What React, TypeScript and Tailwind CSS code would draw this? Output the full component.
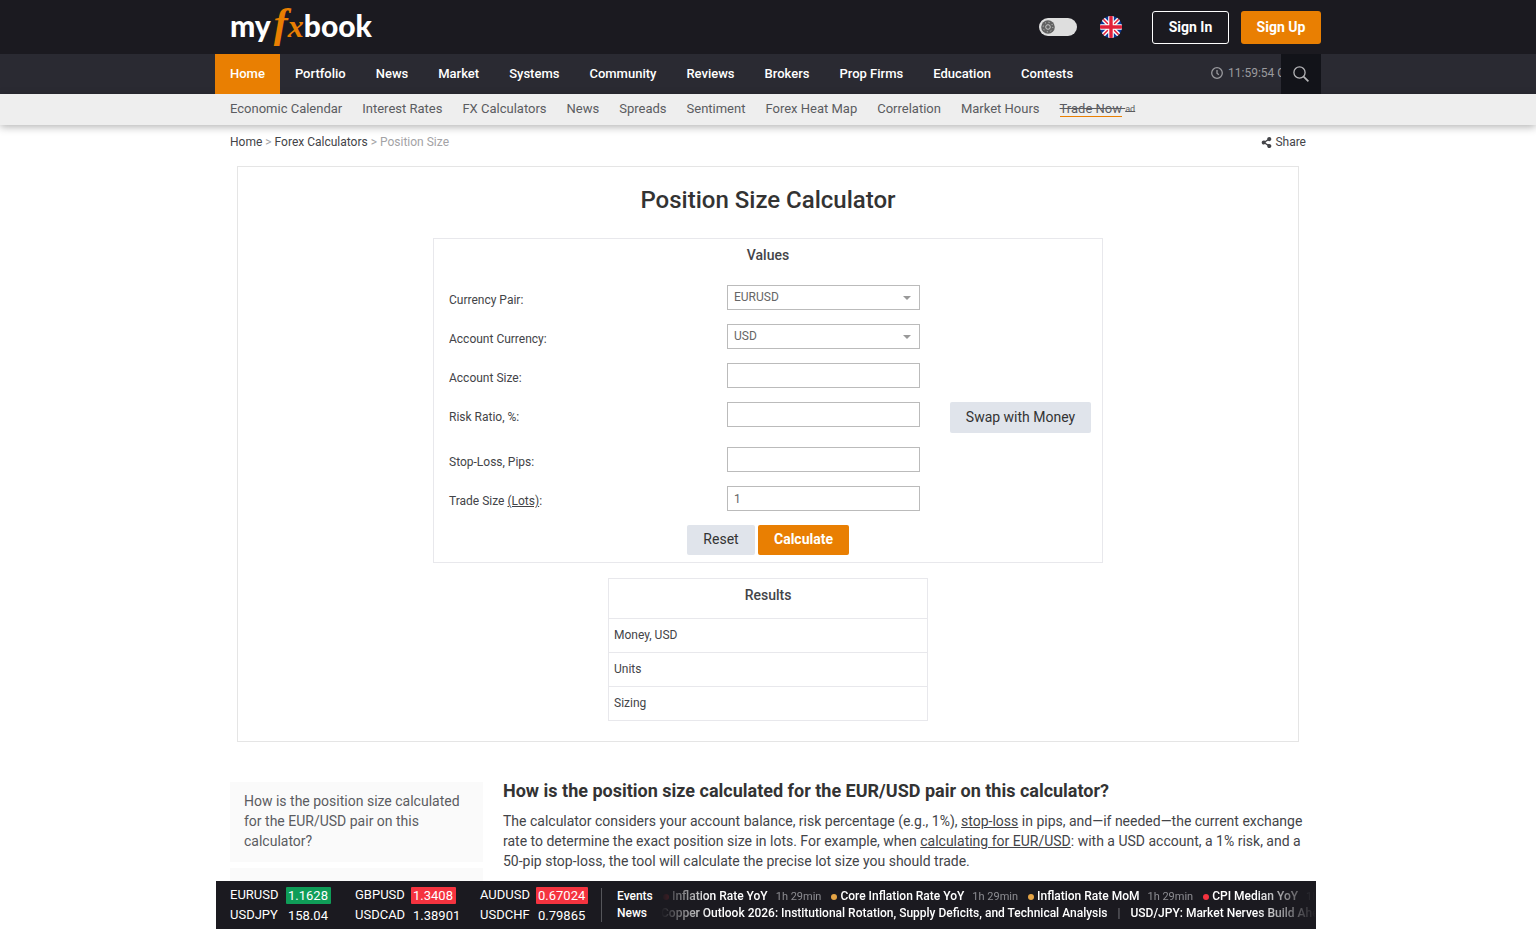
import React from "react";
import { FaShareAlt } from "react-icons/fa";

const NAV = ["Home", "Portfolio", "News", "Market", "Systems", "Community", "Reviews", "Brokers", "Prop Firms", "Education", "Contests"];
const SUBNAV = ["Economic Calendar", "Interest Rates", "FX Calculators", "News", "Spreads", "Sentiment", "Forex Heat Map", "Correlation", "Market Hours"];

function Logo() {
  return (
    <a href="#" aria-label="myfxbook" className="flex h-[54px] items-baseline font-['Lato',sans-serif] text-[30px] leading-[46px] font-black text-white">
      <span>my</span>
      <span className="ml-[3px] font-['Liberation_Serif',serif] text-[42px] font-bold text-[#e97f02] italic">f</span>
      <span className="font-['Liberation_Serif',serif] text-[32px] font-bold text-[#e97f02] italic">x</span>
      <span>book</span>
    </a>
  );
}

function ThemeToggle() {
  return (
    <button type="button" aria-label="Toggle dark mode" className="flex h-[18px] w-[38px] items-center rounded-full bg-[#dedede] px-0.5">
      <svg viewBox="0 0 14 14" className="size-[14px]">
        <circle cx="7" cy="7" r="6.8" fill="#626262" />
        <circle cx="7" cy="7" r="2.3" fill="none" stroke="#d0d0d0" strokeWidth="0.9" />
        <circle cx="7" cy="7" r="4.8" fill="none" stroke="#d0d0d0" strokeWidth="1" strokeDasharray="1 2.77" />
      </svg>
    </button>
  );
}

function Flag() {
  return (
    <button type="button" aria-label="English" className="size-[22px]">
      <svg viewBox="0 0 22 22" className="size-[22px]">
        <clipPath id="flag-round"><circle cx="11" cy="11" r="11" /></clipPath>
        <g clipPath="url(#flag-round)">
          <rect width="22" height="22" fill="#0a3a97" />
          <path d="M0 0L22 22M22 0L0 22" stroke="#fff" strokeWidth="4.4" />
          <path d="M0 0L22 22M22 0L0 22" stroke="#e2203a" strokeWidth="1.5" />
          <path d="M11 0V22M0 11H22" stroke="#fff" strokeWidth="5.6" />
          <path d="M11 0V22M0 11H22" stroke="#e2203a" strokeWidth="3.4" />
        </g>
      </svg>
    </button>
  );
}

const fieldClass = "h-[25px] w-full appearance-none border border-[#bbb] bg-white px-1.5 text-xs text-[#666] outline-none";

function Row({ id, label, children, extra }: { id: string; label: React.ReactNode; children: React.ReactNode; extra?: React.ReactNode }) {
  return (
    <div className="grid grid-cols-[278px_193px_1fr] items-start">
      <label htmlFor={id} className="pt-1.5 leading-[18px]">{label}</label>
      <div className="relative pb-3.5">{children}</div>
      <div className="pb-3.5 pl-[30px]">{extra}</div>
    </div>
  );
}

function Select({ id, value }: { id: string; value: string }) {
  return (
    <>
      <select id={id} defaultValue={value} className={fieldClass + " pb-0.5"}>
        <option>{value}</option>
      </select>
      <svg viewBox="0 0 8 4" className="pointer-events-none absolute top-[11px] right-[9px] h-1 w-2"><path d="M0 0H8L4 4Z" fill="#999" /></svg>
    </>
  );
}

const QUOTES = [
  [["EURUSD", "1.1628", "bg-[#0f9d58]"], ["GBPUSD", "1.3408", "bg-[#f5333f]"], ["AUDUSD", "0.67024", "bg-[#f5333f]"]],
  [["USDJPY", "158.04", ""], ["USDCAD", "1.38901", ""], ["USDCHF", "0.79865", ""]],
];

const EVENTS = [
  ["Inflation Rate YoY", "bg-[#f5333f]"],
  ["Core Inflation Rate YoY", "bg-[#e5a445]"],
  ["Inflation Rate MoM", "bg-[#e5a445]"],
  ["CPI Median YoY", "bg-[#f5333f]"],
];

function Ticker() {
  return (
    <div className="fixed inset-x-0 bottom-0 flex justify-center pr-1">
      <div className="flex h-12 w-full max-w-[1100px] items-center bg-[#1b1a20] pl-3.5 text-white">
        <table className="mt-px w-[371px] shrink-0 table-fixed text-left text-[13px] leading-[17px]">
          <colgroup>
            <col className="w-[56px]" />
            <col className="w-[69px]" />
            <col className="w-[56px]" />
            <col className="w-[69px]" />
            <col className="w-[56px]" />
            <col />
          </colgroup>
          <tbody>
            {QUOTES.map((row, i) => (
              <tr key={i} className="h-5">
                {row.map(([symbol, price, tone]) => (
                  <React.Fragment key={symbol}>
                    <td className="p-0 pb-0.5">{symbol}</td>
                    <td className="p-0"><span className={"block w-fit rounded-[1px] pr-[3px] pl-0.5 " + tone}>{price}</span></td>
                  </React.Fragment>
                ))}
              </tr>
            ))}
          </tbody>
        </table>
        <div className="h-[34px] w-px shrink-0 bg-[#55555a]" />
        <div className="ml-[15px] w-11 shrink-0 text-xs leading-[17px] font-medium">
          <p>Events</p>
          <p>News</p>
        </div>
        <div className="min-w-0 flex-1 overflow-hidden text-xs leading-[17px] font-medium whitespace-nowrap [mask-image:linear-gradient(to_right,transparent,#000_50px,#000_calc(100%_-_60px),transparent)]">
          <div className="flex items-center pl-0.5">
            {EVENTS.map(([name, tone]) => (
              <span key={name} className="flex shrink-0 items-center">
                <span className={"mr-[3px] size-1.5 rounded-full " + tone} />
                {name}
                <span className="mr-2.5 ml-2 text-[11px] font-normal text-[#8d8d92]">1h 29min</span>
              </span>
            ))}
          </div>
          <div className="flex">
            <span>Copper Outlook 2026: Institutional Rotation, Supply Deficits, and Technical Analysis</span>
            <span className="px-2.5 font-normal text-[#77777c]">|</span>
            <span>USD/JPY: Market Nerves Build Ahead</span>
          </div>
        </div>
      </div>
    </div>
  );
}

export default function App() {
  return (
    <div className="min-h-screen bg-white font-['Roboto',sans-serif] text-xs text-[#434448]">
      <header className="bg-[#1b1a20]">
        <div className="mx-auto flex h-[54px] max-w-[1106px] items-center pl-[15px]">
          <Logo />
          <div className="ml-auto flex items-center">
            <ThemeToggle />
            <div className="ml-[23px] flex"><Flag /></div>
            <button type="button" className="ml-[30px] h-[33px] w-[77px] rounded-[3px] border border-white text-sm font-bold text-white">Sign In</button>
            <button type="button" className="ml-3 h-[33px] w-20 rounded-[3px] bg-[#e97f02] text-sm font-bold text-white">Sign Up</button>
          </div>
        </div>
      </header>
      <nav className="bg-[#2a2a32]">
        <div className="mx-auto flex h-10 max-w-[1106px] items-stretch">
          {NAV.map((item, i) => (
            <a key={item} href="#" className={"flex items-center px-[15px] text-[13px] font-medium whitespace-nowrap text-white " + (i === 0 ? "bg-[#e97f02]" : "")}>{item}</a>
          ))}
          <div className="ml-auto flex w-[70px] items-center overflow-hidden pb-0.5 whitespace-nowrap text-[#9a9a9e]">
            <svg viewBox="0 0 12 12" className="mr-[5px] size-3 shrink-0" fill="none" stroke="currentColor" strokeWidth="1.3"><circle cx="6" cy="6" r="5.3" /><path d="M6 3V6.3L7.8 7.8" /></svg>
            11:59:54 C
          </div>
          <button type="button" aria-label="Search" className="flex w-10 items-center justify-center bg-[#121319] text-[#b5b5b8]">
            <svg viewBox="0 0 16 16" className="size-4" fill="none" stroke="currentColor" strokeWidth="1.3"><circle cx="6.5" cy="6.5" r="5.6" /><path d="M10.6 10.6L15.4 15.4" strokeWidth="1.7" /></svg>
          </button>
        </div>
      </nav>
      <nav className="bg-[#eee] shadow-[0_2px_8px_rgba(0,0,0,0.3)]">
        <div className="mx-auto flex h-[31px] max-w-[1076px] items-center gap-5 pb-0.5 text-[13px] leading-[15px] whitespace-nowrap text-[#5b5c61]">
          {SUBNAV.map((item) => <a key={item} href="#">{item}</a>)}
          <a href="#" className="line-through">
            <span className="border-b border-[#e97f02]">Trade Now</span>{" "}
            <span className="align-[1px] text-[9px]">ad</span>
          </a>
        </div>
      </nav>

      <main className="mx-auto max-w-[1076px]">
        <div className="flex h-[41px] items-center justify-between pb-[7px]">
          <div className="flex gap-[3px] text-[#a3a3a6]">
            <a href="#" className="text-[#434448]">Home</a>&gt;<a href="#" className="text-[#434448]">Forex Calculators</a>&gt;<span>Position Size</span>
          </div>
          <button type="button" className="flex items-center gap-[3px]"><FaShareAlt className="size-[11px]" />Share</button>
        </div>

        <section className="mx-[7px] border border-[#e5e5e5] pb-5">
          <h1 className="pt-[17px] text-center text-2xl leading-8 font-medium text-[#333]">Position Size Calculator</h1>
          <form className="mx-auto mt-[22px] max-w-[670px] border border-[#e8e8ec] pb-[7px] pl-[15px]" onSubmit={(e) => e.preventDefault()}>
            <h2 className="-ml-[15px] pt-1.5 pb-5 text-center text-sm leading-5 font-medium">Values</h2>
            <Row id="pair" label="Currency Pair:"><Select id="pair" value="EURUSD" /></Row>
            <Row id="currency" label="Account Currency:"><Select id="currency" value="USD" /></Row>
            <Row id="size" label="Account Size:"><input id="size" className={fieldClass} /></Row>
            <Row id="risk" label="Risk Ratio, %:" extra={<button type="button" className="h-[31px] w-[141px] rounded-[2px] bg-[#e0e4eb] pb-0.5 text-sm text-[#333]">Swap with Money</button>}>
              <input id="risk" className={fieldClass} />
            </Row>
            <Row id="stop" label="Stop-Loss, Pips:"><input id="stop" className={fieldClass} /></Row>
            <Row id="trade" label={<>Trade Size <u>(Lots)</u>:</>}><input id="trade" defaultValue="1" className={fieldClass} /></Row>
            <div className="-ml-[15px] flex justify-center gap-[3px]">
              <button type="reset" className="h-[30px] w-[68px] rounded-[2px] bg-[#e0e4eb] pb-0.5 text-sm text-[#333]">Reset</button>
              <button type="submit" className="h-[30px] w-[91px] rounded-[2px] bg-[#e97f02] pb-0.5 text-sm font-bold text-white">Calculate</button>
            </div>
          </form>
          <table className="mx-auto mt-[15px] w-full max-w-[320px] border-collapse border border-[#e8e8ec]">
            <thead>
              <tr className="h-10 border-b border-[#e8e8ec]"><th className="pb-2 text-sm font-medium">Results</th></tr>
            </thead>
            <tbody>
              {["Money, USD", "Units", "Sizing"].map((r) => (
                <tr key={r} className="h-[34px] border-b border-[#e8e8ec]"><td className="px-[5px] pb-0.5">{r}</td></tr>
              ))}
            </tbody>
          </table>
        </section>

        <div className="mt-10 flex gap-5">
          <aside className="flex w-[253px] shrink-0 flex-col gap-1.5">
            <a href="#" className="block bg-[#fafafa] px-3.5 pt-[9px] pb-[11px] text-sm leading-5 text-[#5b5c61]">How is the position size calculated for the EUR/USD pair on this calculator?</a>
            <div className="h-12 bg-[#fafafa]" />
          </aside>
          <article className="min-w-0 flex-1">
            <h2 className="-mt-[3px] text-lg leading-6 font-bold text-[#333]">How is the position size calculated for the EUR/USD pair on this calculator?</h2>
            <p className="mt-2 text-sm leading-5">
              The calculator considers your account balance, risk percentage (e.g., 1%), <a href="#" className="underline">stop-loss</a> in pips, and—if needed—the current exchange rate to determine the exact position size in lots. For example, when <a href="#" className="underline">calculating for EUR/USD</a>: with a USD account, a 1% risk, and a 50-pip stop-loss, the tool will calculate the precise lot size you should trade.
            </p>
          </article>
        </div>
      </main>
      <Ticker />
    </div>
  );
}
